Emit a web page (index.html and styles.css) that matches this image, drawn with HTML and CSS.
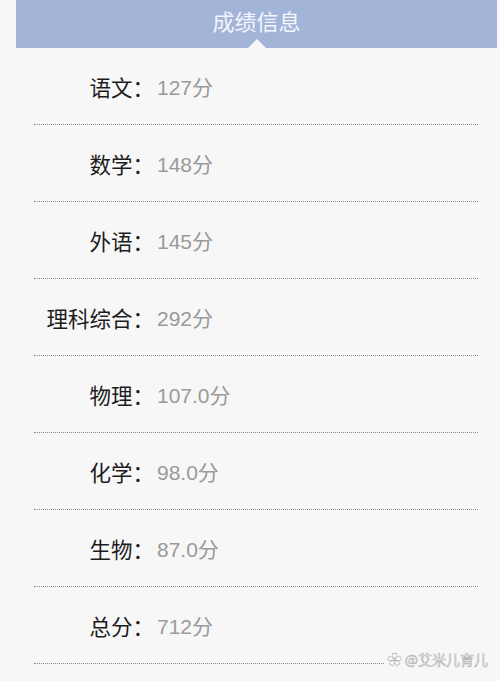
FILE: index.html
```html
<!DOCTYPE html>
<html lang="zh-CN">
<head>
    <meta charset="UTF-8">
    <meta name="viewport" content="width=device-width, initial-scale=1.0">
    <title>成绩信息</title>
    <link rel="stylesheet" href="styles.css">
</head>
<body>
    <div class="header">成绩信息</div>
    <div class="score-list">
        <div class="row"><span class="label">语文：</span><span class="value">127分</span></div>
        <div class="row"><span class="label">数学：</span><span class="value">148分</span></div>
        <div class="row"><span class="label">外语：</span><span class="value">145分</span></div>
        <div class="row"><span class="label">理科综合：</span><span class="value">292分</span></div>
        <div class="row"><span class="label">物理：</span><span class="value">107.0分</span></div>
        <div class="row"><span class="label">化学：</span><span class="value">98.0分</span></div>
        <div class="row"><span class="label">生物：</span><span class="value">87.0分</span></div>
        <div class="row"><span class="label">总分：</span><span class="value">712分</span></div>
    </div>
    <div class="watermark">✿ @艾米儿育儿</div>
</body>
</html>
```

FILE: styles.css
```css
body {
    margin: 0;
    padding: 0;
    background: #f7f7f7;
    font-family: "Noto Sans CJK SC", "Noto Sans", sans-serif;
    color: #1c1c1c;
    height: 681px;
    overflow: hidden;
    position: relative;
}

.header {
    margin-left: 16px;
    margin-right: 3px;
    height: 48px;
    background: #a3b4d9;
    color: #f4f6fb;
    font-size: 22px;
    line-height: 40px;
    text-align: center;
    position: relative;
}

/* little pointer under the title */
.header::after {
    content: '';
    position: absolute;
    left: 232px;
    bottom: 0;
    border-left: 9px solid transparent;
    border-right: 9px solid transparent;
    border-bottom: 9px solid #f7f7f7;
}

.score-list {
    padding: 0 22px 0 34px;
}

.row {
    height: 76px;
    display: flex;
    align-items: center;
    border-bottom: 1px dotted #8e8e8e;
    font-size: 21px;
}

.label {
    width: 120px;
    text-align: right;
    font-size: 21.5px;
}

.value {
    margin-left: 3px;
    color: #9a9a9a;
    font-family: "Liberation Sans", "Noto Sans CJK SC", sans-serif;
}

.watermark {
    position: absolute;
    right: 12px;
    bottom: 12px;
    font-size: 14px;
    color: #ffffff;
    -webkit-text-stroke: 0.6px #b0b0b0;
    background: #f7f7f7;
    padding-left: 3px;
}
```
